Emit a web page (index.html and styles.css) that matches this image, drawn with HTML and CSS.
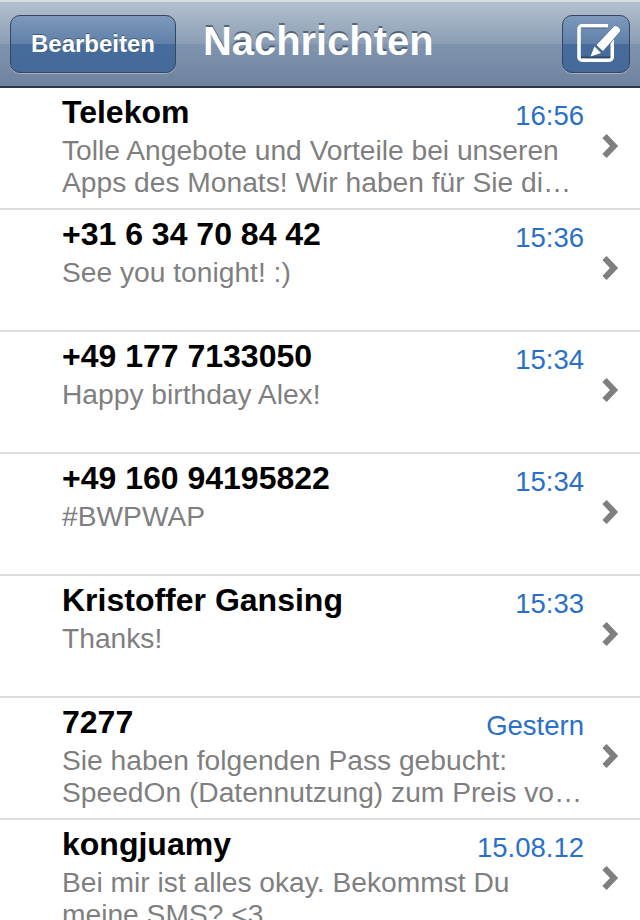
FILE: index.html
```html
<!DOCTYPE html>
<html lang="de">
<head>
  <meta charset="UTF-8">
  <title>Nachrichten</title>
  <link rel="stylesheet" href="styles.css">
</head>
<body>

<div class="navbar">
  <a class="btn btn-edit">Bearbeiten</a>
  <h1 class="nav-title">Nachrichten</h1>
  <a class="btn btn-compose">
    <svg width="48" height="44" viewBox="0 0 48 44">
      <path d="M7.500 5.500h28M8 35.200h31" fill="none" stroke="#2f4560" stroke-width="1.500"/>
      <path d="M36 3.750H10a3 3 0 0 0-3 3v28.500a3 3 0 0 0 3 3h27.250a3 3 0 0 0 3-3V15" fill="none" stroke="#fff" stroke-width="3.500"/>
      <path d="M24 23L41.500 4.500a3 3 0 0 1 4.500 0l1.500 1.500a3 3 0 0 1 0 4.500L31 29.500z" fill="#fff" stroke="#3f6493" stroke-width=".8"/>
      <path d="M22.500 24.500l6.500 6.500-10.500 3.500z" fill="#fff"/>
    </svg>
  </a>
</div>

<ul class="list">
  <li class="row">
    <div class="row-head"><span class="name">Telekom</span><span class="time">16:56</span></div>
    <p class="preview">Tolle Angebote und Vorteile bei unseren<br>Apps des Monats! Wir haben für Sie di…</p>
    <svg class="chevron" width="20" height="28" viewBox="0 0 20 28"><path d="M3.500 4l9.500 10-9.500 10" fill="none" stroke="#7f7f7f" stroke-width="6"/></svg>
  </li>
  <li class="row">
    <div class="row-head"><span class="name">+31 6 34 70 84 42</span><span class="time">15:36</span></div>
    <p class="preview">See you tonight! :)</p>
    <svg class="chevron" width="20" height="28" viewBox="0 0 20 28"><path d="M3.500 4l9.500 10-9.500 10" fill="none" stroke="#7f7f7f" stroke-width="6"/></svg>
  </li>
  <li class="row">
    <div class="row-head"><span class="name">+49 177 7133050</span><span class="time">15:34</span></div>
    <p class="preview">Happy birthday Alex!</p>
    <svg class="chevron" width="20" height="28" viewBox="0 0 20 28"><path d="M3.500 4l9.500 10-9.500 10" fill="none" stroke="#7f7f7f" stroke-width="6"/></svg>
  </li>
  <li class="row">
    <div class="row-head"><span class="name">+49 160 94195822</span><span class="time">15:34</span></div>
    <p class="preview">#BWPWAP</p>
    <svg class="chevron" width="20" height="28" viewBox="0 0 20 28"><path d="M3.500 4l9.500 10-9.500 10" fill="none" stroke="#7f7f7f" stroke-width="6"/></svg>
  </li>
  <li class="row">
    <div class="row-head"><span class="name">Kristoffer Gansing</span><span class="time">15:33</span></div>
    <p class="preview">Thanks!</p>
    <svg class="chevron" width="20" height="28" viewBox="0 0 20 28"><path d="M3.500 4l9.500 10-9.500 10" fill="none" stroke="#7f7f7f" stroke-width="6"/></svg>
  </li>
  <li class="row">
    <div class="row-head"><span class="name">7277</span><span class="time">Gestern</span></div>
    <p class="preview">Sie haben folgenden Pass gebucht:<br>SpeedOn (Datennutzung) zum Preis vo…</p>
    <svg class="chevron" width="20" height="28" viewBox="0 0 20 28"><path d="M3.500 4l9.500 10-9.500 10" fill="none" stroke="#7f7f7f" stroke-width="6"/></svg>
  </li>
  <li class="row">
    <div class="row-head"><span class="name">kongjuamy</span><span class="time">15.08.12</span></div>
    <p class="preview">Bei mir ist alles okay. Bekommst Du<br>meine SMS? &lt;3</p>
    <svg class="chevron" width="20" height="28" viewBox="0 0 20 28"><path d="M3.500 4l9.500 10-9.500 10" fill="none" stroke="#7f7f7f" stroke-width="6"/></svg>
  </li>
</ul>

</body>
</html>
```

FILE: styles.css
```css
* {
  margin: 0;
  padding: 0;
  list-style: none;
  box-sizing: border-box;
}

html,
body {
  height: 920px;
  overflow: hidden;
}

body {
  background-color: #fff;
  font-family: "Liberation Sans", Arial, sans-serif;
}

.navbar {
  height: 88px;
  padding: 13px 10px 0;
  display: flex;
  align-items: flex-start;
  border-top: 2px solid #d9dde2;
  border-bottom: 2px solid #2d3540;
  background: linear-gradient(#b3c0ce 0, #8b9eb5 50%, #7f94ae 50%, #6f83a0 100%);
}

.btn {
  height: 58px;
  border: 1px solid #34475f;
  border-radius: 10px;
  display: flex;
  align-items: center;
  justify-content: center;
  background: linear-gradient(#7e99bd 0, #5f80a8 50%, #466c9b 50%, #456a99 100%);
  box-shadow: 0 1px 0 rgba(255, 255, 255, .35);
}

.btn-edit {
  width: 166px;
  color: #fff;
  font-size: 24px;
  font-weight: bold;
  text-shadow: 0 -1px 0 rgba(0, 0, 0, .35);
}

.btn-compose {
  width: 68px;
  margin-left: auto;
}

.nav-title {
  margin-left: 27px;
  color: #fff;
  font-size: 39.900px;
  line-height: 52px;
  font-weight: bold;
  text-shadow: 0 -2px 0 rgba(40, 55, 75, .6);
}

.row {
  height: 122px;
  padding: 6px 56px 0 62px;
  border-bottom: 2px solid #dcdcdc;
  position: relative;
}

.row-head {
  display: flex;
  justify-content: space-between;
  align-items: baseline;
}

.name {
  color: #000;
  font-size: 32px;
  line-height: 36px;
  font-weight: bold;
}

.time {
  color: #2a6fc9;
  font-size: 27.500px;
  position: relative;
  top: 2px;
}

.preview {
  color: #7f7f7f;
  font-size: 28.200px;
  line-height: 32px;
  margin-top: 4px;
  white-space: nowrap;
}

.chevron {
  position: absolute;
  right: 19px;
  top: 44px;
}
```
